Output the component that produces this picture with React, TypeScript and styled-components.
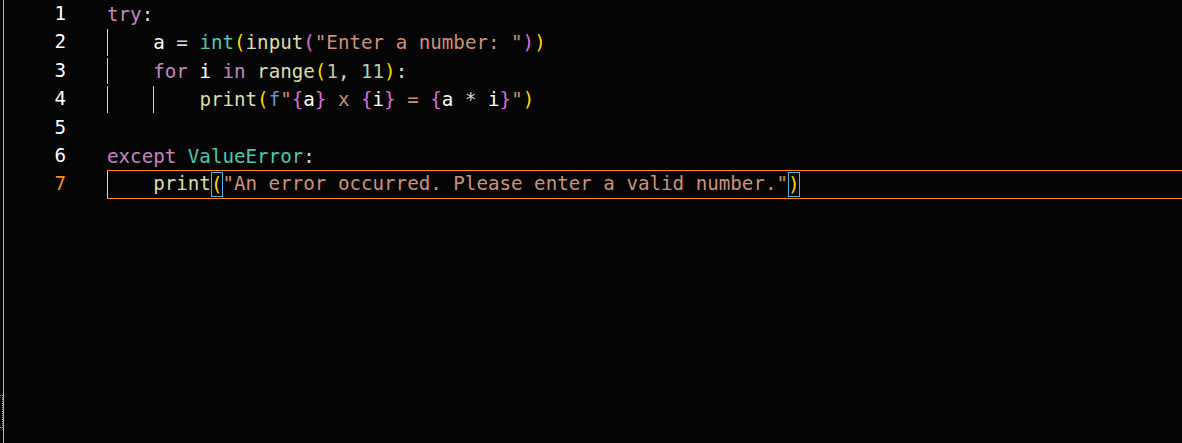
import React from "react";
import styled, { createGlobalStyle } from "styled-components";

const CW = 11.55;
const ROW = 28.4;

const Global = createGlobalStyle`
  html, body { margin: 0; padding: 0; background: #050505; }
  body { overflow: hidden; }
  #root { height: 443px; }
`;

const Root = styled.div`
  position: relative;
  height: 443px;
  padding-left: 3px;
  background: #050505;
  box-sizing: border-box;
`;

const Editor = styled.div`
  height: 100%;
  border-left: 1px solid #86c8e6;
  display: flex;
  flex-direction: column;
  font-family: "DejaVu Sans Mono", "Liberation Mono", monospace;
  font-size: 19.18px;
  color: #ffffff;
`;

const Row = styled.div`
  display: flex;
  height: ${ROW}px;
  line-height: ${ROW}px;
  white-space: pre;
`;

const LineNo = styled.div<{ $active?: boolean }>`
  width: 62px;
  flex: none;
  text-align: right;
  color: ${(p) => (p.$active ? "#ff8b1f" : "#ffffff")};
`;

const Code = styled.div<{ $current?: boolean }>`
  flex: 1;
  margin-left: 41px;
  display: flex;
  align-items: stretch;
  box-sizing: border-box;
  border-top: 1px solid ${(p) => (p.$current ? "#ff8b1f" : "transparent")};
  border-bottom: 1px solid ${(p) => (p.$current ? "#ff8b1f" : "transparent")};
  line-height: ${(p) => (p.$current ? ROW - 2 : ROW)}px;
`;

const Indent = styled.span`
  width: ${CW * 4}px;
  flex: none;
  box-shadow: inset 1px 0 0 #d6d6d6;
`;

const Text = styled.span`
  display: flex;
  align-items: stretch;
`;

const colors: Record<string, string> = {
  kw: "#c586c0",
  fn: "#dcdcaa",
  cls: "#4ec9b0",
  str: "#ce9178",
  num: "#b5cea8",
  var: "#ffffff",
  op: "#d4d4d4",
  pre: "#569cd6",
  b1: "#ffd700",
  b2: "#da70d6",
};

const Tok = styled.span<{ $k: string }>`
  color: ${(p) => colors[p.$k]};
`;

const Match = styled.span<{ $k: string }>`
  position: relative;
  display: block;
  width: ${CW}px;
  margin-top: 1px;
  margin-bottom: 1px;
  color: ${(p) => colors[p.$k]};
  &::after {
    content: "";
    position: absolute;
    top: 0;
    bottom: 0;
    left: 0;
    width: 12px;
    box-sizing: border-box;
    border: 1px solid #4db6e2;
    z-index: 2;
    pointer-events: none;
  }
`;

const Marker = styled.div`
  position: absolute;
  left: 0;
  top: 395px;
  width: 2px;
  height: 31px;
  border: 1px dotted #e8892a;
  border-left: none;
`;

type T = [string, string, boolean?];
type Line = { indent: number; toks: T[] };

const lines: Line[] = [
  { indent: 0, toks: [["try", "kw"], [":", "op"]] },
  {
    indent: 1,
    toks: [
      ["a", "var"], [" = ", "op"], ["int", "cls"], ["(", "b1"], ["input", "fn"], ["(", "b2"],
      ["\"Enter a number: \"", "str"], [")", "b2"], [")", "b1"],
    ],
  },
  {
    indent: 1,
    toks: [
      ["for", "kw"], [" ", "op"], ["i", "var"], [" ", "op"], ["in", "kw"], [" ", "op"], ["range", "fn"],
      ["(", "b1"], ["1", "num"], [", ", "op"], ["11", "num"], [")", "b1"], [":", "op"],
    ],
  },
  {
    indent: 2,
    toks: [
      ["print", "fn"], ["(", "b1"], ["f", "pre"], ["\"", "str"], ["{", "b2"], ["a", "var"], ["}", "b2"],
      [" x ", "str"], ["{", "b2"], ["i", "var"], ["}", "b2"], [" = ", "str"], ["{", "b2"], ["a", "var"],
      [" * ", "op"], ["i", "var"], ["}", "b2"], ["\"", "str"], [")", "b1"],
    ],
  },
  { indent: 0, toks: [] },
  { indent: 0, toks: [["except", "kw"], [" ", "op"], ["ValueError", "cls"], [":", "op"]] },
  {
    indent: 1,
    toks: [
      ["print", "fn"], ["(", "b1", true], ["\"An error occurred. Please enter a valid number.\"", "str"],
      [")", "b1", true],
    ],
  },
];

export default function App() {
  return (
    <>
      <Global />
      <Root>
        <Editor>
          {lines.map((ln, i) => {
            const current = i === lines.length - 1;
            return (
              <Row key={i}>
                <LineNo $active={current}>{i + 1}</LineNo>
                <Code $current={current}>
                  {Array.from({ length: ln.indent }).map((_, j) => (
                    <Indent key={j} />
                  ))}
                  <Text>
                    {ln.toks.map(([t, k, m], j) =>
                      m ? (
                        <Match key={j} $k={k}>{t}</Match>
                      ) : (
                        <Tok key={j} $k={k}>{t}</Tok>
                      )
                    )}
                  </Text>
                </Code>
              </Row>
            );
          })}
        </Editor>
        <Marker />
      </Root>
    </>
  );
}
